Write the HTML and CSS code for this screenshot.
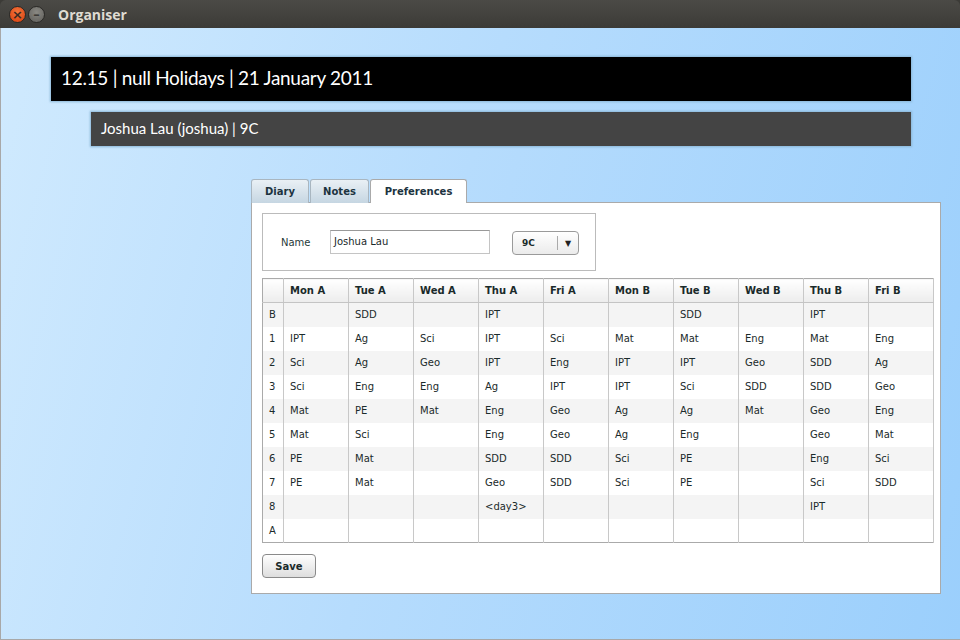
FILE: index.html
```html
<!DOCTYPE html>
<html>
<head>
<meta charset="utf-8">
<title>Organiser</title>
<link rel="stylesheet" href="styles.css">
</head>
<body>
<div class="window">
  <div class="titlebar">
    <span class="wbtn close">×</span>
    <span class="wbtn minimize">–</span>
    <span class="wtitle">Organiser</span>
  </div>
  <div class="main">
    <div class="status">12.15 | null Holidays | 21 January 2011</div>
    <div class="user">Joshua Lau (joshua) | 9C</div>
    <div class="tabarea">
      <div class="tabs">
        <div class="tab">Diary</div>
        <div class="tab">Notes</div>
        <div class="tab active">Preferences</div>
      </div>
      <div class="panel">
        <div class="namebox">
          <span class="label">Name</span>
          <div class="input">Joshua Lau</div>
          <div class="select"><span class="sval">9C</span><span class="sarrow">▼</span></div>
        </div>
        <table class="tt">
          <thead>
            <tr><th class="c0"></th><th>Mon A</th><th>Tue A</th><th>Wed A</th><th>Thu A</th><th>Fri A</th><th>Mon B</th><th>Tue B</th><th>Wed B</th><th>Thu B</th><th>Fri B</th></tr>
          </thead>
          <tbody>
            <tr><td class="c0">B</td><td></td><td>SDD</td><td></td><td>IPT</td><td></td><td></td><td>SDD</td><td></td><td>IPT</td><td></td></tr>
            <tr><td class="c0">1</td><td>IPT</td><td>Ag</td><td>Sci</td><td>IPT</td><td>Sci</td><td>Mat</td><td>Mat</td><td>Eng</td><td>Mat</td><td>Eng</td></tr>
            <tr><td class="c0">2</td><td>Sci</td><td>Ag</td><td>Geo</td><td>IPT</td><td>Eng</td><td>IPT</td><td>IPT</td><td>Geo</td><td>SDD</td><td>Ag</td></tr>
            <tr><td class="c0">3</td><td>Sci</td><td>Eng</td><td>Eng</td><td>Ag</td><td>IPT</td><td>IPT</td><td>Sci</td><td>SDD</td><td>SDD</td><td>Geo</td></tr>
            <tr><td class="c0">4</td><td>Mat</td><td>PE</td><td>Mat</td><td>Eng</td><td>Geo</td><td>Ag</td><td>Ag</td><td>Mat</td><td>Geo</td><td>Eng</td></tr>
            <tr><td class="c0">5</td><td>Mat</td><td>Sci</td><td></td><td>Eng</td><td>Geo</td><td>Ag</td><td>Eng</td><td></td><td>Geo</td><td>Mat</td></tr>
            <tr><td class="c0">6</td><td>PE</td><td>Mat</td><td></td><td>SDD</td><td>SDD</td><td>Sci</td><td>PE</td><td></td><td>Eng</td><td>Sci</td></tr>
            <tr><td class="c0">7</td><td>PE</td><td>Mat</td><td></td><td>Geo</td><td>SDD</td><td>Sci</td><td>PE</td><td></td><td>Sci</td><td>SDD</td></tr>
            <tr><td class="c0">8</td><td></td><td></td><td></td><td>&lt;day3&gt;</td><td></td><td></td><td></td><td></td><td>IPT</td><td></td></tr>
            <tr><td class="c0">A</td><td></td><td></td><td></td><td></td><td></td><td></td><td></td><td></td><td></td><td></td></tr>
          </tbody>
        </table>
        <button class="save">Save</button>
      </div>
    </div>
  </div>
</div>
</body>
</html>
```
FILE: styles.css
```css
html, body {
  margin: 0;
  padding: 0;
  width: 960px;
  height: 640px;
  overflow: hidden;
  background: #3c3b37;
}
.window {
  width: 960px;
  height: 640px;
  display: flex;
  flex-direction: column;
}
.titlebar {
  height: 28px;
  flex: none;
  display: flex;
  align-items: center;
  background: linear-gradient(#4b4a46, #3c3b37);
  border-radius: 6px 6px 0 0;
  padding-left: 9px;
  box-sizing: border-box;
}
.wbtn {
  width: 17px;
  height: 17px;
  border-radius: 50%;
  display: flex;
  align-items: center;
  justify-content: center;
  font-family: "DejaVu Sans", sans-serif;
  font-size: 13px;
  font-weight: bold;
  line-height: 1;
  color: #3a2a22;
  box-sizing: border-box;
  border: 1px solid #2a2926;
}
.close {
  background: radial-gradient(circle at 50% 35%, #f4773e, #e04d1a 70%);
}
.minimize {
  margin-left: 2px;
  background: radial-gradient(circle at 50% 35%, #8a8983, #6b6a66 70%);
  color: #3c3b37;
}
.wtitle {
  margin-left: 13px;
  font-family: "Open Sans", "DejaVu Sans", sans-serif;
  font-weight: bold;
  font-size: 14px;
  color: #dfdbd2;
}
.main {
  flex: 1;
  background: linear-gradient(105deg, #d0eafe 0%, #b6dcfd 45%, #9bcffc 100%);
  border-left: 1px solid #a8a8a8;
  border-bottom: 1px solid #a8a8a8;
  padding: 29px 0 0 50px;
  box-sizing: border-box;
}
.status {
  width: 860px;
  height: 44px;
  box-sizing: border-box;
  background: #000;
  color: #fff;
  font-family: "Lato", "Open Sans", sans-serif;
  font-size: 19px;
  letter-spacing: -0.3px;
  line-height: 42px;
  padding-left: 10px;
  box-shadow: 0 0 2px 1px #8ab6d6;
}
.user {
  margin: 11px 0 0 40px;
  width: 820px;
  height: 34px;
  box-sizing: border-box;
  background: #444;
  color: #fff;
  font-family: "Lato", "Open Sans", sans-serif;
  font-size: 15px;
  line-height: 33px;
  padding-left: 10px;
  box-shadow: 0 0 2px 1px #8ab6d6;
}
.tabarea {
  margin: 33px 0 0 200px;
  width: 690px;
}
.tabs {
  display: flex;
  height: 24px;
  margin-bottom: -1px;
}
.tab {
  height: 24px;
  box-sizing: border-box;
  border: 1px solid #a9b6c0;
  border-bottom: none;
  border-radius: 3px 3px 0 0;
  background: linear-gradient(#e9f0f5, #c6d6e2);
  font-family: "DejaVu Sans", sans-serif;
  font-weight: bold;
  font-size: 10px;
  color: #1c3340;
  display: flex;
  align-items: center;
  justify-content: center;
  margin-right: 1px;
}
.tab:nth-child(1) { width: 58px; }
.tab:nth-child(2) { width: 59px; }
.tab.active {
  width: 97px;
  background: #fff;
  border-color: #aaa;
  height: 24px;
  position: relative;
  z-index: 1;
}
.panel {
  background: #fff;
  border: 1px solid #aaa;
  height: 392px;
  box-sizing: border-box;
  padding: 10px 0 0 10px;
  font-family: "DejaVu Sans", sans-serif;
  font-size: 10px;
  color: #1b2b2b;
}
.namebox {
  width: 334px;
  height: 58px;
  box-sizing: border-box;
  border: 1px solid #bbb;
  display: flex;
  align-items: center;
  padding-left: 18px;
}
.label {
  color: #1f3a3a;
  width: 49px;
}
.input {
  width: 160px;
  height: 24px;
  box-sizing: border-box;
  border: 1px solid #c4c4c4;
  border-top-color: #999;
  padding-left: 3px;
  line-height: 21px;
  color: #1a2a2a;
}
.select {
  margin-left: 22px;
  margin-top: 2px;
  width: 67px;
  height: 24px;
  box-sizing: border-box;
  border: 1px solid #9a9a9a;
  border-radius: 4px;
  background: linear-gradient(#ffffff, #ebebeb);
  display: flex;
  align-items: center;
}
.sval {
  flex: 1;
  font-weight: bold;
  font-size: 9px;
  padding-left: 9px;
  height: 14px;
  line-height: 14px;
  border-right: 1px solid #aaa;
  color: #1a2a2a;
}
.sarrow {
  width: 20px;
  text-align: center;
  font-size: 8px;
  color: #222;
}
.tt {
  margin-top: 7px;
  border-collapse: collapse;
  border: 1px solid #aaa;
  table-layout: fixed;
  width: 671px;
  font-size: 10px;
}
.tt th, .tt td {
  height: 24px;
  padding: 0 0 0 6px;
  text-align: left;
  border-right: 1px solid #c8c8c8;
  white-space: nowrap;
  box-sizing: border-box;
}
.tt th {
  width: 65px;
  height: 24px;
  font-weight: bold;
  background: linear-gradient(#ffffff, #ececec);
  border-bottom: 1px solid #c4c4c4;
  color: #1a2a2a;
}
.tt th.c0 { width: 21px; }
.tt tbody tr:nth-child(odd) td { background: #f4f4f4; }
.tt tbody tr:nth-child(even) td { background: #fff; }
.tt td.c0 { padding-left: 6px; }
.save {
  margin-top: 11px;
  width: 54px;
  height: 24px;
  border: 1px solid #8a8a8a;
  border-radius: 4px;
  background: linear-gradient(#ffffff, #dedede);
  font-family: "DejaVu Sans", sans-serif;
  font-weight: bold;
  font-size: 10px;
  color: #1a2a2a;
  padding: 0;
  display: block;
}
```
